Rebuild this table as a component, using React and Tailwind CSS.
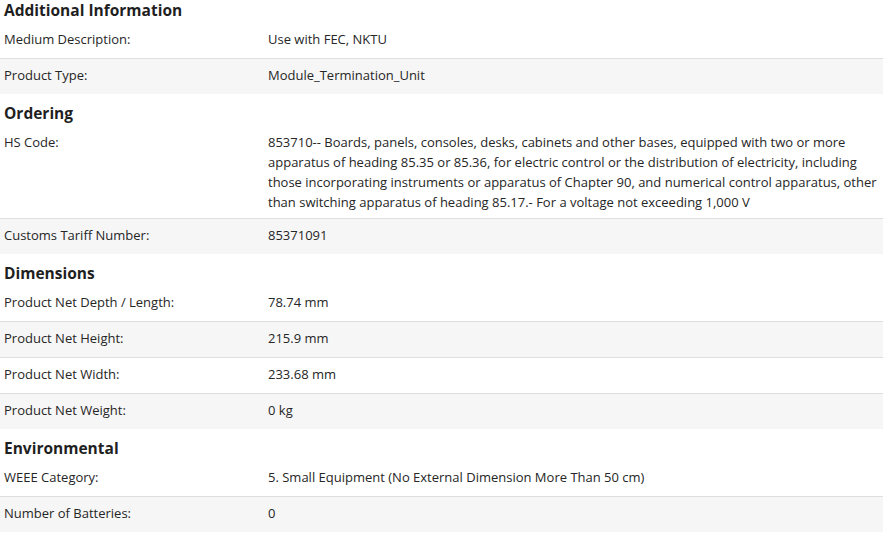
const sections = [
  {
    title: 'Additional Information',
    rows: [
      ['Medium Description:', 'Use with FEC, NKTU'],
      ['Product Type:', 'Module_Termination_Unit'],
    ],
  },
  {
    title: 'Ordering',
    rows: [
      [
        'HS Code:',
        '853710-- Boards, panels, consoles, desks, cabinets and other bases, equipped with two or more apparatus of heading 85.35 or 85.36, for electric control or the distribution of electricity, including those incorporating instruments or apparatus of Chapter 90, and numerical control apparatus, other than switching apparatus of heading 85.17.- For a voltage not exceeding 1,000 V',
      ],
      ['Customs Tariff Number:', '85371091'],
    ],
  },
  {
    title: 'Dimensions',
    rows: [
      ['Product Net Depth / Length:', '78.74 mm'],
      ['Product Net Height:', '215.9 mm'],
      ['Product Net Width:', '233.68 mm'],
      ['Product Net Weight:', '0 kg'],
    ],
  },
  {
    title: 'Environmental',
    rows: [
      ['WEEE Category:', '5. Small Equipment (No External Dimension More Than 50 cm)'],
      ['Number of Batteries:', '0'],
    ],
  },
];

function Section({ title, rows, first }) {
  return (
    <section className={first ? '' : 'mt-[9px]'}>
      <h3 className="h-[23px] px-1 pb-[3px] text-[15.5px] font-bold leading-5 text-[#1f1f1f]">
        {title}
      </h3>
      <div>
        {rows.map(([label, value], i) => (
          <div
            key={label}
            className={
              'flex py-[6px] text-[13px] leading-5 text-[#262626] ' +
              (i % 2 === 1 ? 'bg-[#f6f6f6] ' : 'bg-white ') +
              (i > 0 ? 'min-h-[36px] border-t border-[#dedede]' : 'min-h-[35px]')
            }
          >
            <div className="w-[264px] shrink-0 px-1">{label}</div>
            <div className="flex-1 pl-1">{value}</div>
          </div>
        ))}
      </div>
    </section>
  );
}

export default function App() {
  return (
    <div
      className="w-[883px] bg-white"
      style={{ fontFamily: '"Open Sans", "Noto Sans", sans-serif' }}
    >
      {sections.map((s, i) => (
        <Section key={s.title} title={s.title} rows={s.rows} first={i === 0} />
      ))}
    </div>
  );
}
